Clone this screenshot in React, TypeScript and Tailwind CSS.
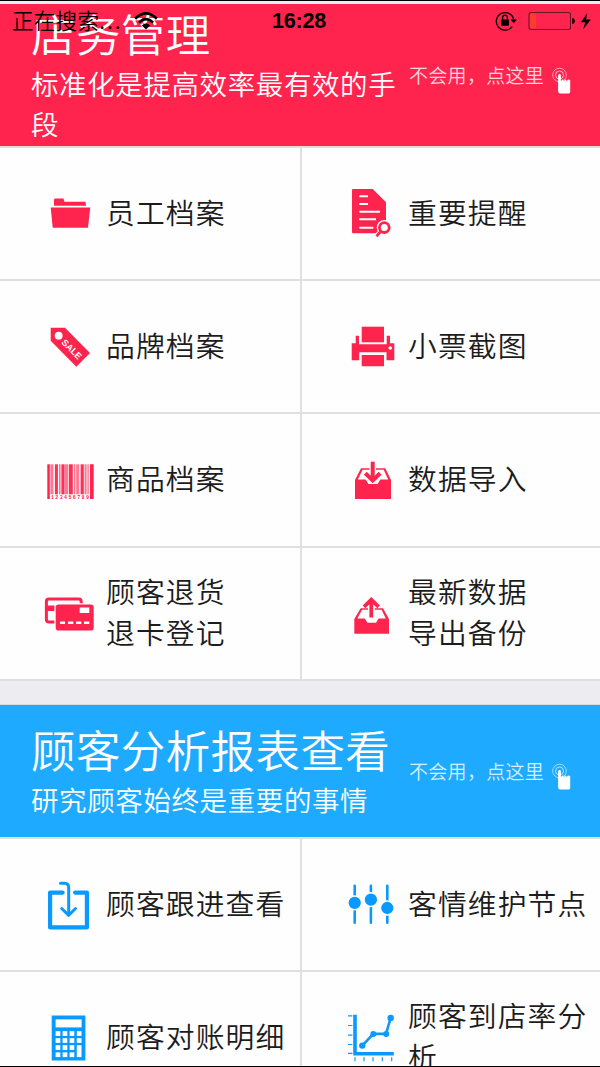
import type { ReactNode } from "react";

const RED = "#ff244e";
const BLUE = "#0a99ff";

function Icon({ children }: { children: ReactNode }) {
  return (
    <svg className="h-[60px] w-[60px] shrink-0" viewBox="0 0 60 60" fill="none">
      {children}
    </svg>
  );
}

const folder = (
  <Icon>
    <path d="M10.7 23.5H50.3L48 43.7H12.7ZM14 21.8V15.5L15 14.5H23.5L24.5 17.7H45.5L46 21.8Z" fill={RED} />
  </Icon>
);

const tag = (
  <Icon>
    <path d="M10.7 10.7H25L50 36L36.3 49.7L10.7 23.7Z" fill={RED} />
    <circle cx="18.7" cy="18.7" r="3.9" fill="#fff" />
    <text
      x="32"
      y="35.4"
      transform="rotate(45 32 32)"
      textAnchor="middle"
      className="font-['Liberation_Sans',sans-serif] text-[9px] font-bold"
      fill="#fff"
    >
      SALE
    </text>
  </Icon>
);

const note = (
  <Icon>
    <path d="M11 5H30.7L44 18.3V49.3H11Q10 49.3 10 48V6Q10 5 11 5Z" fill={RED} />
    <path d="M17.3 12.2H26M17.3 20H26M17.3 27.7H38M17.3 35.3H34M17.3 43.7H31.3" stroke="#fff" strokeWidth="2" />
    <path d="M39 47L34.5 52.3" stroke="#fff" strokeWidth="5" />
    <circle cx="42.3" cy="43.6" r="7.6" fill="#fff" />
    <circle cx="42.3" cy="43.6" r="4.9" stroke={RED} strokeWidth="2.8" />
    <path d="M39 47L34.5 52.3" stroke={RED} strokeWidth="2.8" />
  </Icon>
);

const printer = (
  <Icon>
    <path d="M19.7 9.7H42V25.3H19.7Z" fill={RED} />
    <path
      d="M13.7 18.7H17V27.3H44.7V18.7H48V26.3H52.3V43.3H44.5V35.3H17.2V43.3H9.7V26.3H13.7ZM19.7 38H42V49.2H19.7Z"
      fill={RED}
    />
    <circle cx="48.2" cy="31" r="1.8" fill="#fff" />
  </Icon>
);

const barcodeBars: { x: number; w: number; soft?: boolean }[] = [
  { x: 10.4, w: 3, soft: true },
  { x: 14.9, w: 3 },
  { x: 19, w: 1.6, soft: true },
  { x: 21.4, w: 3.2 },
  { x: 25, w: 3, soft: true },
  { x: 28.8, w: 4 },
  { x: 33.8, w: 1.6, soft: true },
  { x: 36.2, w: 3, soft: true },
  { x: 40.6, w: 3.2 },
  { x: 44.6, w: 2, soft: true },
  { x: 47.4, w: 1.4, soft: true },
];

const barcode = (
  <Icon>
    <path d="M7.3 14.3H9.8V49H7.3ZM50 14.3H53.7V49H50Z" fill={RED} />
    {barcodeBars.map(({ x, w, soft }) => (
      <rect key={x} x={x} y="14.3" width={w} height="30" fill={RED} fillOpacity={soft ? 0.62 : 0.95} />
    ))}
    <text
      x="11"
      y="49"
      textLength="38"
      className="font-['Liberation_Mono',monospace] text-[5px] font-bold"
      fill={RED}
    >
      123456789
    </text>
  </Icon>
);

const cards = (
  <Icon>
    <rect x="6.4" y="15" width="34.8" height="23" rx="2.5" stroke={RED} strokeWidth="3" />
    <path d="M6 21.5H16V27H6Z" fill={RED} />
    <rect x="14.4" y="19.2" width="42" height="30" rx="3.5" fill="#fff" />
    <rect x="15.7" y="20.5" width="38" height="26" rx="2.8" fill={RED} />
    <path
      d="M39.7 23.6H49.3V29H39.7ZM20 37.4H25V40H20ZM28 37.4H33.3V40H28ZM36 37.4H41.3V40H36ZM44 37.4H49.3V40H44Z"
      fill="#fff"
    />
  </Icon>
);

const trayIn = (
  <Icon>
    <path d="M13 30L19 18.3H43.3L49 30V49H13Z" fill={RED} />
    <path d="M20.6 19.8H41.7L46.2 29.6H38.3L35.6 34H26.4L23.7 29.6H15.8Z" fill="#fff" />
    <path d="M27.5 16H34V21H27.5Z" fill="#fff" />
    <path d="M30.7 11.7V30M23.3 23.2L30.7 30.4L38.1 23.2" stroke={RED} strokeWidth="4" />
  </Icon>
);

const trayOut = (
  <Icon>
    <path d="M12.3 35L18.7 24.2H41L47 35V49.8H12.3Z" fill={RED} />
    <path d="M20 25.7H39.6L43.8 34.4H36.6L34 38.8H25.4L22.8 34.4H15.4Z" fill="#fff" />
    <path d="M26 22H32.8V27H26Z" fill="#fff" />
    <path d="M29.3 33.5V15.5M22 22.8L29.3 15.6L36.6 22.8" stroke={RED} strokeWidth="3.8" />
  </Icon>
);

const inbox = (
  <Icon>
    <path d="M22.6 17.6H10.1V52.4H46.9V17.6H35.1" stroke={BLUE} strokeWidth="4.2" strokeLinecap="round" strokeLinejoin="round" />
    <path d="M20.5 8.3H24.5Q28.7 8.3 28.7 13V39" stroke={BLUE} strokeWidth="3" strokeLinecap="round" />
    <path d="M21.7 33.5L28.7 40.3L35.5 33.5" stroke={BLUE} strokeWidth="3" strokeLinecap="round" strokeLinejoin="round" />
  </Icon>
);

const sliders = (
  <Icon>
    <path d="M12.7 10.8V47.8M28.9 10.8V47.8M45.3 10.8V47.8" stroke={BLUE} strokeWidth="2.6" strokeLinecap="round" />
    <g fill={BLUE} stroke="#fff" strokeWidth="1.5">
      <circle cx="12.7" cy="27.8" r="6.9" />
      <circle cx="28.9" cy="24.6" r="6.9" />
      <circle cx="45.3" cy="33" r="6.9" />
    </g>
  </Icon>
);

const keyColumns = [15.6, 22.6, 29.6, 36.8];
const keyRows = [23.2, 30.2, 37.2, 44.4];

const calculator = (
  <Icon>
    <rect x="11.7" y="7.5" width="33.7" height="45" fill={BLUE} />
    <rect x="15.6" y="11.4" width="26" height="8" fill="#fff" />
    {keyRows.map((y, r) =>
      keyColumns.map((x, c) =>
        c === 3 && r === 3 ? null : (
          <rect key={`${x}-${y}`} x={x} y={y} width="4.7" height={c === 3 && r === 2 ? 11.9 : 4.7} fill="#fff" />
        ),
      ),
    )}
  </Icon>
);

const chart = (
  <Icon>
    <path d="M13 6.8V45.8H51.8" stroke={BLUE} strokeWidth="3.6" />
    <path
      d="M6 7.8H10.4M6 17.5H10.4M6 27.2H10.4M6 36.5H10.4M6 45.3H10.4M13 49.2V53.2M22 49.2V53.2M31 49.2V53.2M40.3 49.2V53.2M49.7 49.2V53.2"
      stroke={BLUE}
      strokeWidth="1.2"
    />
    <path d="M20.3 37.6L31.3 25.9H44L48.7 9.8" stroke={BLUE} strokeWidth="2.6" />
    <g fill={BLUE}>
      <circle cx="20.3" cy="37.6" r="3.2" />
      <circle cx="31.3" cy="25.9" r="3" />
      <circle cx="44.2" cy="25.9" r="3" />
      <circle cx="48.7" cy="9.9" r="3.2" />
    </g>
  </Icon>
);

function TapHand() {
  return (
    <svg className="mt-3.5 h-[30px] w-6 shrink-0" viewBox="0 0 24 30" fill="none">
      <circle cx="7.5" cy="8" r="6.8" stroke="#fff" strokeOpacity=".55" strokeWidth="1" />
      <circle cx="7.5" cy="8" r="4" stroke="#fff" strokeOpacity=".65" strokeWidth="1" />
      <path
        d="M6.1 8.4Q6.3 7 7.5 7Q8.7 7 8.9 8.4V14.2H9.5V13Q10.7 12 11.6 13V14.2H12.4V13Q13.5 12 14.4 13V14.2H15.2V13Q16.7 12 18.2 13.2V25Q18.2 26.4 16.7 26.4H7.9Q6.1 26.4 6.1 24Z"
        fill="#fff"
      />
    </svg>
  );
}

function Banner({ title, subtitle, className }: { title: string; subtitle: string; className: string }) {
  return (
    <header className={`flex items-center text-white ${className}`}>
      <div className="ml-[31px] w-[378px] shrink-0 pb-[3px] font-[350]">
        <h2 className="text-[44.5px] leading-[57px] tracking-[0.4px]">{title}</h2>
        <p className="pt-0.5 text-[27.5px] leading-[40px] tracking-[0.6px]">{subtitle}</p>
      </div>
      <a className="flex items-center text-[19px] leading-7 font-[350] tracking-[0.3px] whitespace-nowrap">
        <span className="w-[143px] opacity-80">不会用，点这里</span>
        <TapHand />
      </a>
    </header>
  );
}

function Cell({ icon, label, height }: { icon: ReactNode; label: string; height: string }) {
  return (
    <div className={`flex items-center border-b-2 border-[#dfdfe1] bg-[#fefefe] pl-10 ${height}`}>
      {icon}
      <span className="ml-1.5 w-[190px] pb-[5px] text-[28.8px] leading-[41px] font-[350] tracking-[1.1px] whitespace-pre-line text-[#1c1c1c]">
        {label}
      </span>
    </div>
  );
}

function Row({ left, right, height = "h-[133px]" }: { left: [ReactNode, string]; right: [ReactNode, string]; height?: string }) {
  return (
    <div className="grid grid-cols-[300px_298px] gap-x-0.5 bg-[#dfdfe1]">
      <Cell icon={left[0]} label={left[1]} height={height} />
      <Cell icon={right[0]} label={right[1]} height={height} />
    </div>
  );
}

function StatusBar() {
  return (
    <div className="absolute inset-x-0 top-0 flex h-10 items-center text-black">
      <span className="ml-3 w-[120px] pb-0.5 text-[21.5px] font-[350] tracking-[0.3px] whitespace-nowrap">
        正在搜索<span className="tracking-[2px]">...</span>
      </span>
      <svg className="ml-[2px] h-5 w-6" viewBox="0 0 24 20" fill="none">
        <path d="M1.2 7.7Q12 -3 22.8 7.7" stroke="currentColor" strokeWidth="2.7" />
        <path d="M4.9 11.6Q12 4.8 19.1 11.6" stroke="currentColor" strokeWidth="2.6" />
        <path d="M7.9 14.4Q12 10.6 16.1 14.4L12 18.5Z" fill="currentColor" />
      </svg>
      <span className="ml-[114px] w-[60px] font-['Liberation_Sans',sans-serif] text-[21.5px] font-bold tracking-[-0.2px]">16:28</span>
      <svg className="ml-[163px] h-[22px] w-[23px]" viewBox="0 0 23 22" fill="none">
        <path d="M17.2 16.6A8.8 8.8 0 1 1 18.8 10" stroke="currentColor" strokeWidth="1.3" />
        <path d="M15.6 9.6H22L18.8 13.3Z" fill="currentColor" />
        <rect x="6.1" y="9.5" width="7.8" height="6.2" rx=".6" fill="currentColor" />
        <path d="M7.6 10V7.5A2.4 2.4 0 0 1 12.4 7.5V10" stroke="currentColor" strokeWidth="1.3" />
      </svg>
      <svg className="ml-[10px] h-5 w-[66px]" viewBox="0 0 66 20" fill="none">
        <rect x="1" y="1.5" width="41.5" height="17" rx="2.2" stroke="#6d1426" strokeWidth="1.1" />
        <rect x="2.2" y="2.7" width="6" height="14.6" rx="1" fill="#ff3b30" />
        <path d="M44.2 7Q46.8 7.3 46.8 10T44.2 13Z" fill="currentColor" />
        <path d="M59.2 2L53 11.3H57.2L55.2 18.2L62.8 8.6H58.1Z" fill="currentColor" />
      </svg>
    </div>
  );
}

export default function App() {
  return (
    <div className="relative flex h-[1067px] w-[600px] flex-col overflow-hidden border-y border-black bg-[#ededf1] font-['Noto_Sans_CJK_SC','Noto_Sans_CJK_JP',sans-serif]">
      <section className="shrink-0 pt-[3px]">
        <Banner title="店务管理" subtitle="标准化是提高效率最有效的手段" className="h-[142px] bg-[#ff244e]" />
        <div className="h-0.5 bg-[#ead9dd]" />
        <Row left={[folder, "员工档案"]} right={[note, "重要提醒"]} />
        <Row left={[tag, "品牌档案"]} right={[printer, "小票截图"]} />
        <Row left={[barcode, "商品档案"]} right={[trayIn, "数据导入"]} height="h-[134px]" />
        <Row left={[cards, "顾客退货\n退卡登记"]} right={[trayOut, "最新数据\n导出备份"]} />
      </section>
      <section className="mt-[23px] shrink-0 border-t border-[#d5dbe0]">
        <Banner title="顾客分析报表查看" subtitle="研究顾客始终是重要的事情" className="h-[132px] bg-[#1eabff]" />
        <div className="h-0.5 bg-[#dfdfe1]" />
        <Row left={[inbox, "顾客跟进查看"]} right={[sliders, "客情维护节点"]} />
        <Row left={[calculator, "顾客对账明细"]} right={[chart, "顾客到店率分析"]} />
      </section>
      <StatusBar />
    </div>
  );
}
